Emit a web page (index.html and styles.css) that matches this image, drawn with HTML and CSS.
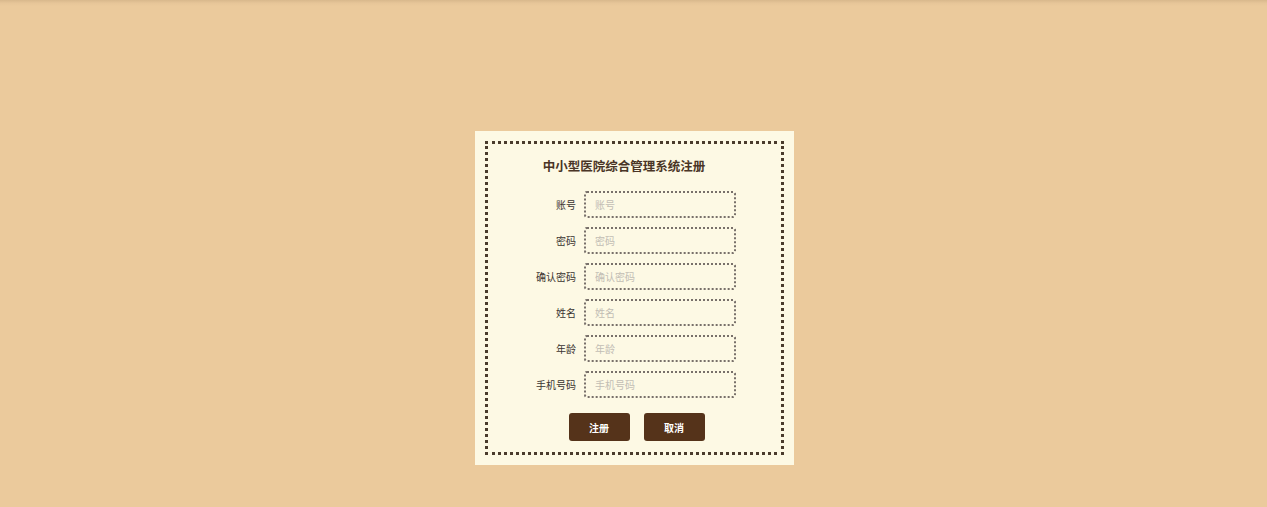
FILE: index.html
```html
<!DOCTYPE html>
<html lang="zh">
<head>
<meta charset="utf-8">
<title>中小型医院综合管理系统注册</title>
<link rel="stylesheet" href="styles.css">
</head>
<body>
<div class="page">
  <div class="card">
    <form class="form">
      <h1 class="title">中小型医院综合管理系统注册</h1>
      <div class="rows">
        <div class="row"><label class="label">账号</label><input class="input" placeholder="账号"></div>
        <div class="row"><label class="label">密码</label><input class="input" type="password" placeholder="密码"></div>
        <div class="row"><label class="label">确认密码</label><input class="input" type="password" placeholder="确认密码"></div>
        <div class="row"><label class="label">姓名</label><input class="input" placeholder="姓名"></div>
        <div class="row"><label class="label">年龄</label><input class="input" placeholder="年龄"></div>
        <div class="row"><label class="label">手机号码</label><input class="input" placeholder="手机号码"></div>
      </div>
      <div class="actions">
        <button type="button" class="btn">注册</button>
        <button type="button" class="btn">取消</button>
      </div>
    </form>
  </div>
</div>
</body>
</html>
```

FILE: styles.css
```css
html, body {
  margin: 0;
  padding: 0;
  height: 100%;
}
body {
  background: linear-gradient(#d8b88c 0, #e6c598 3px, #ebca9c 6px, #ebca9c 100%);
  font-family: "Noto Sans CJK SC", "Noto Sans", sans-serif;
}
.page {
  display: flex;
  justify-content: center;
  padding-top: 131px;
  padding-left: 2px;
}
.card {
  width: 319px;
  height: 334px;
  box-sizing: border-box;
  background: #fdf9e4;
  padding: 10px;
}
.form {
  height: 100%;
  box-sizing: border-box;
  border: 3px dotted #4a3b2c;
  padding: 12px 0 10px;
  display: flex;
  flex-direction: column;
}
.title {
  margin: 0;
  font-size: 12.5px;
  line-height: 20px;
  font-weight: bold;
  color: #4a3526;
  text-align: center;
  padding-right: 21px;
}
.rows {
  margin-top: 15px;
  display: flex;
  flex-direction: column;
  gap: 9px;
}
.row {
  display: flex;
  align-items: center;
  gap: 8px;
}
.label {
  width: 88px;
  text-align: right;
  font-size: 10px;
  color: #3a3430;
}
.input {
  width: 152px;
  height: 27px;
  box-sizing: border-box;
  border: 2px dotted #78706a;
  border-radius: 3px;
  background: transparent;
  padding: 0 9px;
  font-family: inherit;
  font-size: 10px;
  color: #333;
  outline: none;
}
.input::placeholder {
  color: #c2bdb4;
}
.actions {
  margin-top: 15px;
  display: flex;
  justify-content: center;
  gap: 14px;
  padding-left: 4px;
}
.btn {
  width: 61px;
  height: 28px;
  border: none;
  border-radius: 3px;
  background: #55331a;
  color: #fff;
  font-family: inherit;
  font-size: 10px;
  font-weight: bold;
  padding: 0;
}
```
